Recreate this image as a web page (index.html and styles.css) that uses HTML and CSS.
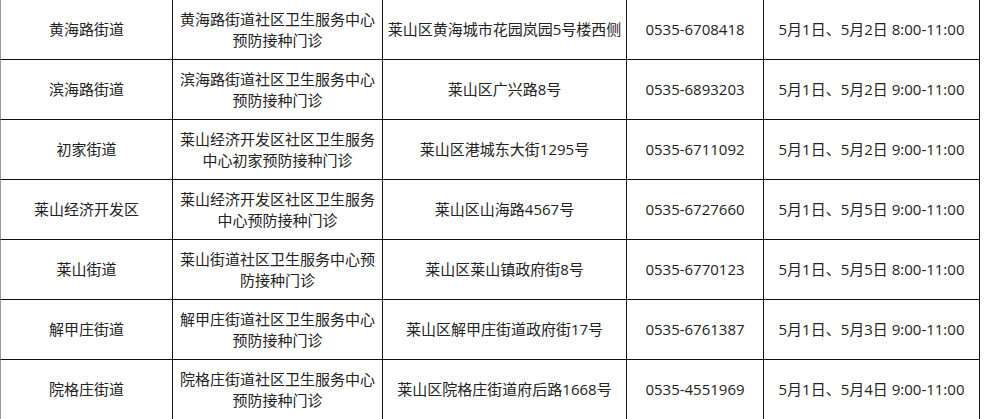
FILE: index.html
```html
<!DOCTYPE html>
<html lang="zh-CN">
<head>
<meta charset="utf-8">
<title>预防接种门诊</title>
<link rel="stylesheet" href="styles.css">
</head>
<body>
<div class="sheet">
  <div class="row">
    <div class="cell c1">黄海路街道</div>
    <div class="cell c2">黄海路街道社区卫生服务中心预防接种门诊</div>
    <div class="cell c3">莱山区黄海城市花园岚园5号楼西侧</div>
    <div class="cell c4">0535-6708418</div>
    <div class="cell c5">5月1日、5月2日 8:00-11:00</div>
  </div>
  <div class="row">
    <div class="cell c1">滨海路街道</div>
    <div class="cell c2">滨海路街道社区卫生服务中心预防接种门诊</div>
    <div class="cell c3">莱山区广兴路8号</div>
    <div class="cell c4">0535-6893203</div>
    <div class="cell c5">5月1日、5月2日 9:00-11:00</div>
  </div>
  <div class="row">
    <div class="cell c1">初家街道</div>
    <div class="cell c2">莱山经济开发区社区卫生服务中心初家预防接种门诊</div>
    <div class="cell c3">莱山区港城东大街1295号</div>
    <div class="cell c4">0535-6711092</div>
    <div class="cell c5">5月1日、5月2日 9:00-11:00</div>
  </div>
  <div class="row">
    <div class="cell c1">莱山经济开发区</div>
    <div class="cell c2">莱山经济开发区社区卫生服务中心预防接种门诊</div>
    <div class="cell c3">莱山区山海路4567号</div>
    <div class="cell c4">0535-6727660</div>
    <div class="cell c5">5月1日、5月5日 9:00-11:00</div>
  </div>
  <div class="row">
    <div class="cell c1">莱山街道</div>
    <div class="cell c2">莱山街道社区卫生服务中心预防接种门诊</div>
    <div class="cell c3">莱山区莱山镇政府街8号</div>
    <div class="cell c4">0535-6770123</div>
    <div class="cell c5">5月1日、5月5日 8:00-11:00</div>
  </div>
  <div class="row">
    <div class="cell c1">解甲庄街道</div>
    <div class="cell c2">解甲庄街道社区卫生服务中心预防接种门诊</div>
    <div class="cell c3">莱山区解甲庄街道政府街17号</div>
    <div class="cell c4">0535-6761387</div>
    <div class="cell c5">5月1日、5月3日 9:00-11:00</div>
  </div>
  <div class="row">
    <div class="cell c1">院格庄街道</div>
    <div class="cell c2">院格庄街道社区卫生服务中心预防接种门诊</div>
    <div class="cell c3">莱山区院格庄街道府后路1668号</div>
    <div class="cell c4">0535-4551969</div>
    <div class="cell c5">5月1日、5月4日 9:00-11:00</div>
  </div>
</div>
</body>
</html>
```
FILE: styles.css
```css
html, body {
  margin: 0;
  padding: 0;
  background: #ffffff;
}

body {
  font-family: "Open Sans", "Noto Sans CJK SC", sans-serif;
  font-size: 15px;
  line-height: 21px;
  color: #222222;
}

.sheet {
  width: 980px;
  display: flex;
  flex-direction: column;
}

.row {
  display: grid;
  grid-template-columns: 173px 210px 244px 137px 216px;
  height: 60px;
}

.cell {
  box-sizing: border-box;
  display: flex;
  align-items: center;
  justify-content: center;
  text-align: center;
  border-right: 1px solid #111;
  border-bottom: 1px solid #111;
  padding: 0 5px;
  white-space: normal;
}

.c1 {
  border-left: 1px solid #9a9a9a;
}

.c3, .c4, .c5 {
  padding: 0;
  white-space: nowrap;
}
```
